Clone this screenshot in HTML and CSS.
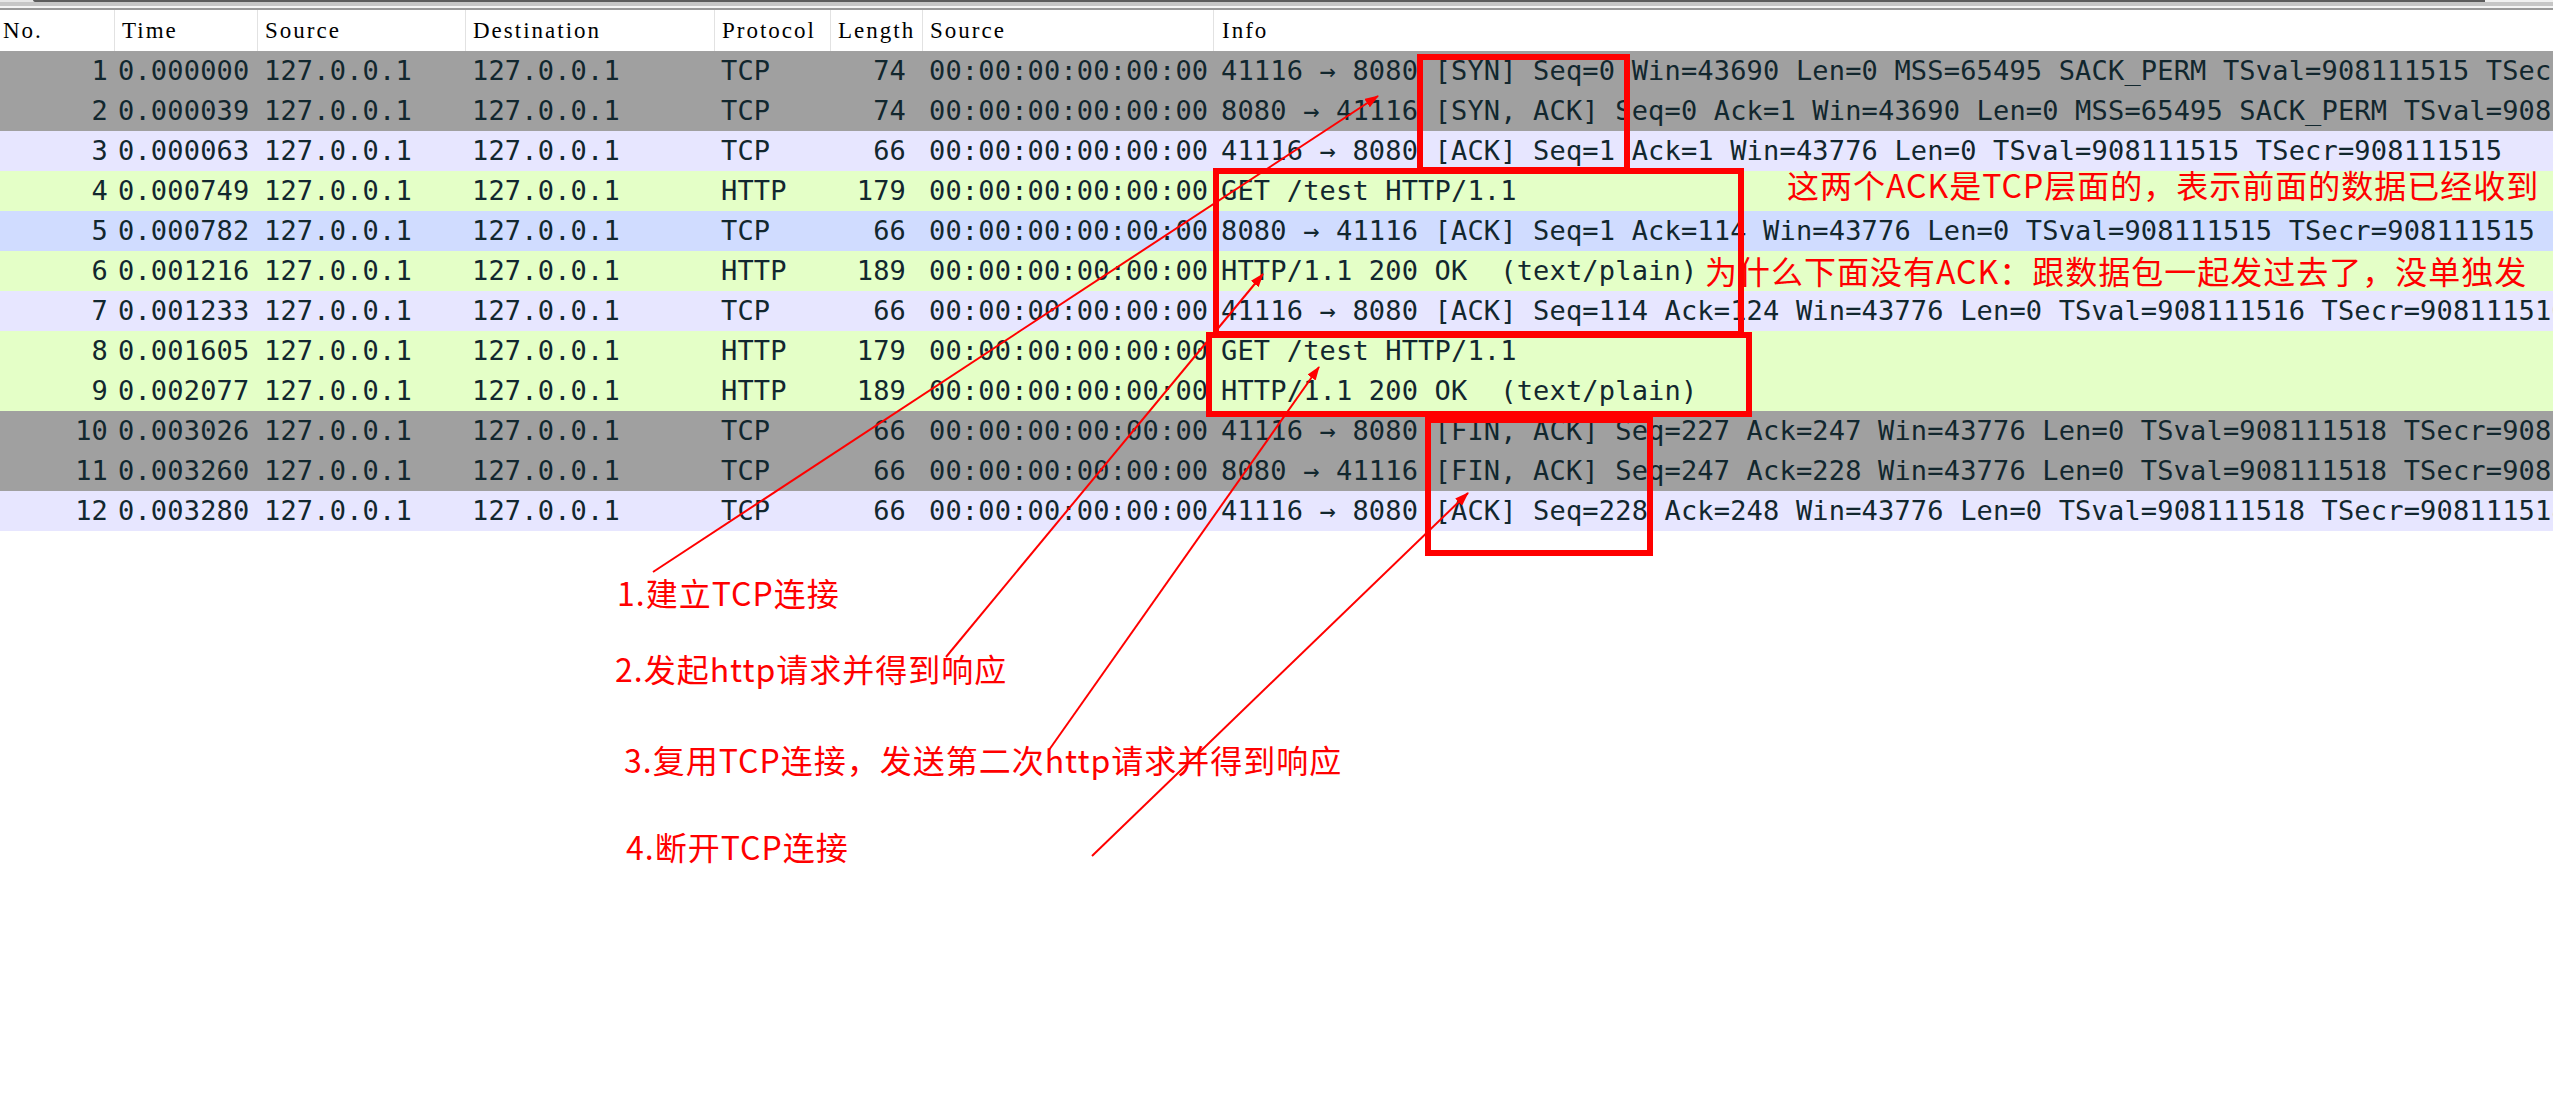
FILE: index.html
```html
<!DOCTYPE html>
<html lang="zh-CN">
<head>
<meta charset="utf-8">
<title>Wireshark HTTP keep-alive</title>
<link rel="stylesheet" href="styles.css">
</head>
<body>
<div class="page">
  <div class="topbar">
    <div class="tb-row1"><div class="tb-left"></div><div class="tb-field"></div><div class="tb-right"></div></div>
    <div class="tb-row2"></div>
    <div class="tb-row3"></div>
    <div class="tb-row4"></div>
  </div>

  <div class="packets">
    <div class="row head">
      <div class="c no">No.</div>
      <div class="c time">Time</div>
      <div class="c src">Source</div>
      <div class="c dst">Destination</div>
      <div class="c proto">Protocol</div>
      <div class="c len">Length</div>
      <div class="c mac">Source</div>
      <div class="c info">Info</div>
    </div>

    <div class="row gray"><div class="c no">1</div><div class="c time">0.000000</div><div class="c src">127.0.0.1</div><div class="c dst">127.0.0.1</div><div class="c proto">TCP</div><div class="c len">74</div><div class="c mac">00:00:00:00:00:00</div><div class="c info">41116 → 8080 [SYN] Seq=0 Win=43690 Len=0 MSS=65495 SACK_PERM TSval=908111515 TSecr=0 WS=128</div></div>
    <div class="row gray"><div class="c no">2</div><div class="c time">0.000039</div><div class="c src">127.0.0.1</div><div class="c dst">127.0.0.1</div><div class="c proto">TCP</div><div class="c len">74</div><div class="c mac">00:00:00:00:00:00</div><div class="c info">8080 → 41116 [SYN, ACK] Seq=0 Ack=1 Win=43690 Len=0 MSS=65495 SACK_PERM TSval=908111515 TSecr=908111515 WS=128</div></div>
    <div class="row tcp"><div class="c no">3</div><div class="c time">0.000063</div><div class="c src">127.0.0.1</div><div class="c dst">127.0.0.1</div><div class="c proto">TCP</div><div class="c len">66</div><div class="c mac">00:00:00:00:00:00</div><div class="c info">41116 → 8080 [ACK] Seq=1 Ack=1 Win=43776 Len=0 TSval=908111515 TSecr=908111515</div></div>
    <div class="row http"><div class="c no">4</div><div class="c time">0.000749</div><div class="c src">127.0.0.1</div><div class="c dst">127.0.0.1</div><div class="c proto">HTTP</div><div class="c len">179</div><div class="c mac">00:00:00:00:00:00</div><div class="c info">GET /test HTTP/1.1</div></div>
    <div class="row blue"><div class="c no">5</div><div class="c time">0.000782</div><div class="c src">127.0.0.1</div><div class="c dst">127.0.0.1</div><div class="c proto">TCP</div><div class="c len">66</div><div class="c mac">00:00:00:00:00:00</div><div class="c info">8080 → 41116 [ACK] Seq=1 Ack=114 Win=43776 Len=0 TSval=908111515 TSecr=908111515</div></div>
    <div class="row http"><div class="c no">6</div><div class="c time">0.001216</div><div class="c src">127.0.0.1</div><div class="c dst">127.0.0.1</div><div class="c proto">HTTP</div><div class="c len">189</div><div class="c mac">00:00:00:00:00:00</div><div class="c info">HTTP/1.1 200 OK  (text/plain)</div></div>
    <div class="row tcp"><div class="c no">7</div><div class="c time">0.001233</div><div class="c src">127.0.0.1</div><div class="c dst">127.0.0.1</div><div class="c proto">TCP</div><div class="c len">66</div><div class="c mac">00:00:00:00:00:00</div><div class="c info">41116 → 8080 [ACK] Seq=114 Ack=124 Win=43776 Len=0 TSval=908111516 TSecr=908111516</div></div>
    <div class="row http"><div class="c no">8</div><div class="c time">0.001605</div><div class="c src">127.0.0.1</div><div class="c dst">127.0.0.1</div><div class="c proto">HTTP</div><div class="c len">179</div><div class="c mac">00:00:00:00:00:00</div><div class="c info">GET /test HTTP/1.1</div></div>
    <div class="row http"><div class="c no">9</div><div class="c time">0.002077</div><div class="c src">127.0.0.1</div><div class="c dst">127.0.0.1</div><div class="c proto">HTTP</div><div class="c len">189</div><div class="c mac">00:00:00:00:00:00</div><div class="c info">HTTP/1.1 200 OK  (text/plain)</div></div>
    <div class="row gray"><div class="c no">10</div><div class="c time">0.003026</div><div class="c src">127.0.0.1</div><div class="c dst">127.0.0.1</div><div class="c proto">TCP</div><div class="c len">66</div><div class="c mac">00:00:00:00:00:00</div><div class="c info">41116 → 8080 [FIN, ACK] Seq=227 Ack=247 Win=43776 Len=0 TSval=908111518 TSecr=908111518</div></div>
    <div class="row gray"><div class="c no">11</div><div class="c time">0.003260</div><div class="c src">127.0.0.1</div><div class="c dst">127.0.0.1</div><div class="c proto">TCP</div><div class="c len">66</div><div class="c mac">00:00:00:00:00:00</div><div class="c info">8080 → 41116 [FIN, ACK] Seq=247 Ack=228 Win=43776 Len=0 TSval=908111518 TSecr=908111518</div></div>
    <div class="row tcp"><div class="c no">12</div><div class="c time">0.003280</div><div class="c src">127.0.0.1</div><div class="c dst">127.0.0.1</div><div class="c proto">TCP</div><div class="c len">66</div><div class="c mac">00:00:00:00:00:00</div><div class="c info">41116 → 8080 [ACK] Seq=228 Ack=248 Win=43776 Len=0 TSval=908111518 TSecr=908111518</div></div>
  </div>

  <svg class="marks" width="2553" height="1103" viewBox="0 0 2553 1103" xmlns="http://www.w3.org/2000/svg">
    <defs>
      <marker id="ah" markerUnits="userSpaceOnUse" markerWidth="14" markerHeight="10" refX="13" refY="5" orient="auto">
        <path d="M0,0 L14,5 L0,10 Z" fill="#ff0000"/>
      </marker>
    </defs>
    <rect x="1420" y="57" width="207" height="113" fill="none" stroke="#ff0000" stroke-width="6"/>
    <rect x="1216" y="171" width="525" height="163" fill="none" stroke="#ff0000" stroke-width="6"/>
    <rect x="1209" y="335" width="540" height="79" fill="none" stroke="#ff0000" stroke-width="6"/>
    <rect x="1428" y="420" width="222" height="133" fill="none" stroke="#ff0000" stroke-width="6"/>
    <line x1="653" y1="572" x2="1378" y2="96" stroke="#ff0000" stroke-width="2" marker-end="url(#ah)"/>
    <line x1="946" y1="657" x2="1263" y2="274" stroke="#ff0000" stroke-width="2" marker-end="url(#ah)"/>
    <line x1="1049" y1="750" x2="1319" y2="367" stroke="#ff0000" stroke-width="2" marker-end="url(#ah)"/>
    <line x1="1092" y1="856" x2="1468" y2="493" stroke="#ff0000" stroke-width="2" marker-end="url(#ah)"/>
  </svg>

  <div class="note n1">1.建立TCP连接</div>
  <div class="note n2">2.发起http请求并得到响应</div>
  <div class="note n3">3.复用TCP连接，发送第二次http请求并得到响应</div>
  <div class="note n4">4.断开TCP连接</div>
  <div class="note n5">这两个ACK是TCP层面的，表示前面的数据已经收到</div>
  <div class="note n6">为什么下面没有ACK：跟数据包一起发过去了，没单独发</div>
</div>
</body>
</html>
```

FILE: styles.css
```css
html, body {
  margin: 0;
  padding: 0;
  background: #ffffff;
  overflow: hidden;
}

.page {
  position: relative;
  width: 2553px;
  height: 1103px;
  overflow: hidden;
}

/* top frame edge */
.topbar {
  display: flex;
  flex-direction: column;
}
.tb-row1 {
  display: flex;
  height: 2px;
}
.tb-left { width: 33px; background: #e6e6e6; }
.tb-field { flex: 1; background: #5c5c5c; border-bottom-left-radius: 2px; }
.tb-right { width: 68px; background: #f0f0f0; }
.tb-row2 { height: 4px; background: #c6c6c6; }
.tb-row3 { height: 2px; background: #f4f4f4; }
.tb-row4 { height: 2px; background: #9a9a9a; }

/* packet list */
.packets {
  display: flex;
  flex-direction: column;
}

.row {
  display: grid;
  grid-template-columns: 114px 143px 208px 249px 116px 92px 291px minmax(0, 1fr);
  height: 40px;
  font-family: "DejaVu Sans Mono", "Liberation Mono", monospace;
  font-size: 27px;
  letter-spacing: 0.17px;
  line-height: 40px;
  color: #12272e;
  white-space: pre;
}

.c {
  overflow: hidden;
  white-space: pre;
  padding-left: 7px;
}

.row .no { text-align: right; padding-left: 0; padding-right: 6px; }
.row .time { padding-left: 4px; }
.row .len { text-align: right; padding-left: 0; padding-right: 16px; }
.row .info { padding-left: 8px; }

.head {
  height: 41px;
  line-height: 41px;
  background: #ffffff;
  color: #000000;
  font-family: "Liberation Serif", "DejaVu Serif", serif;
  font-size: 23px;
  letter-spacing: 2px;
}
.head .c {
  padding-left: 7px;
  border-left: 1px solid #e2e2e2;
  text-align: left;
}
.head .no { padding-left: 3px; padding-right: 0; border-left: none; }
.head .len { padding-right: 0; }
.head .info { padding-left: 8px; }

.gray { background: #a0a0a0; }
.tcp { background: #e7e6ff; }
.http { background: #e4ffc7; }
.blue { background: #d0dcff; }

/* annotation overlay */
.marks {
  position: absolute;
  left: 0;
  top: 0;
  pointer-events: none;
}

.note {
  position: absolute;
  font-family: "Noto Sans CJK SC", "Noto Sans", sans-serif;
  font-size: 32px;
  line-height: 32px;
  color: #ff0000;
  white-space: nowrap;
  letter-spacing: 1px;
}
.n1 { left: 617px; top: 576px; }
.n2 { left: 615px; top: 652px; }
.n3 { left: 624px; top: 743px; }
.n4 { left: 626px; top: 830px; }
.n5 { left: 1787px; top: 168px; }
.n6 { left: 1705px; top: 254px; }
```
